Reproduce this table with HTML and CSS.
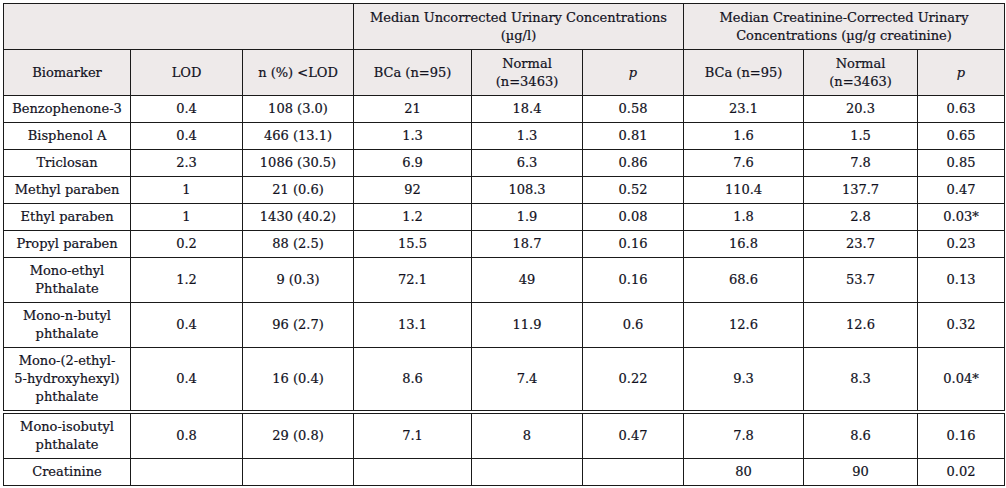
FILE: index.html
```html
<!DOCTYPE html>
<html lang="en">
<head>
<meta charset="utf-8">
<title>Urinary biomarker concentrations</title>
<link rel="stylesheet" href="styles.css">
</head>
<body>
<div class="wrap">
<table class="data">
  <colgroup>
    <col class="c1"><col class="c2"><col class="c3"><col class="c4"><col class="c5"><col class="c6"><col class="c7"><col class="c8"><col class="c9">
  </colgroup>
  <thead>
    <tr class="h1">
      <th colspan="3"></th>
      <th colspan="3">Median Uncorrected Urinary Concentrations (µg/l)</th>
      <th colspan="3">Median Creatinine-Corrected Urinary Concentrations (µg/g creatinine)</th>
    </tr>
    <tr class="h2">
      <th>Biomarker</th>
      <th>LOD</th>
      <th>n (%) &lt;LOD</th>
      <th>BCa (n=95)</th>
      <th>Normal (n=3463)</th>
      <th><i>p</i></th>
      <th>BCa (n=95)</th>
      <th>Normal (n=3463)</th>
      <th><i>p</i></th>
    </tr>
  </thead>
  <tbody>
    <tr><td>Benzophenone-3</td><td>0.4</td><td>108 (3.0)</td><td>21</td><td>18.4</td><td>0.58</td><td>23.1</td><td>20.3</td><td>0.63</td></tr>
    <tr><td>Bisphenol A</td><td>0.4</td><td>466 (13.1)</td><td>1.3</td><td>1.3</td><td>0.81</td><td>1.6</td><td>1.5</td><td>0.65</td></tr>
    <tr><td>Triclosan</td><td>2.3</td><td>1086 (30.5)</td><td>6.9</td><td>6.3</td><td>0.86</td><td>7.6</td><td>7.8</td><td>0.85</td></tr>
    <tr><td>Methyl paraben</td><td>1</td><td>21 (0.6)</td><td>92</td><td>108.3</td><td>0.52</td><td>110.4</td><td>137.7</td><td>0.47</td></tr>
    <tr><td>Ethyl paraben</td><td>1</td><td>1430 (40.2)</td><td>1.2</td><td>1.9</td><td>0.08</td><td>1.8</td><td>2.8</td><td>0.03*</td></tr>
    <tr><td>Propyl paraben</td><td>0.2</td><td>88 (2.5)</td><td>15.5</td><td>18.7</td><td>0.16</td><td>16.8</td><td>23.7</td><td>0.23</td></tr>
    <tr><td>Mono-ethyl<br>Phthalate</td><td>1.2</td><td>9 (0.3)</td><td>72.1</td><td>49</td><td>0.16</td><td>68.6</td><td>53.7</td><td>0.13</td></tr>
    <tr><td>Mono-n-butyl<br>phthalate</td><td>0.4</td><td>96 (2.7)</td><td>13.1</td><td>11.9</td><td>0.6</td><td>12.6</td><td>12.6</td><td>0.32</td></tr>
    <tr><td>Mono-(2-ethyl-<br>5-hydroxyhexyl)<br>phthalate</td><td>0.4</td><td>16 (0.4)</td><td>8.6</td><td>7.4</td><td>0.22</td><td>9.3</td><td>8.3</td><td>0.04*</td></tr>
    <tr class="split"><td>Mono-isobutyl<br>phthalate</td><td>0.8</td><td>29 (0.8)</td><td>7.1</td><td>8</td><td>0.47</td><td>7.8</td><td>8.6</td><td>0.16</td></tr>
    <tr><td>Creatinine</td><td></td><td></td><td></td><td></td><td></td><td>80</td><td>90</td><td>0.02</td></tr>
  </tbody>
</table>
</div>
</body>
</html>
```

FILE: styles.css
```css
html, body {
  margin: 0;
  padding: 0;
  background: #ffffff;
}

.wrap {
  padding: 3px 0 0 3px;
}

.data {
  width: 1001px;
  table-layout: fixed;
  border-collapse: collapse;
  font-family: "DejaVu Serif", "Liberation Serif", serif;
  font-size: 13px;
  line-height: 18px;
  color: #12121e;
  -webkit-text-stroke: 0.2px #12121e;
}

.c1 { width: 127px; }
.c2 { width: 112px; }
.c3 { width: 111px; }
.c4 { width: 118px; }
.c5 { width: 111px; }
.c6 { width: 101px; }
.c7 { width: 120px; }
.c8 { width: 114px; }
.c9 { width: 87px; }

.data th,
.data td {
  border: 1.5px solid #1a1a1a;
  padding: 4px 4px;
  text-align: center;
  vertical-align: middle;
  font-weight: normal;
}

.data thead th {
  background: #eeeaea;
  height: 37px;
  padding-top: 4px;
  padding-bottom: 4px;
}

.data tbody td {
  height: 18px;
}

.data tr.split td {
  border-top: 4px double #1a1a1a;
}
```
